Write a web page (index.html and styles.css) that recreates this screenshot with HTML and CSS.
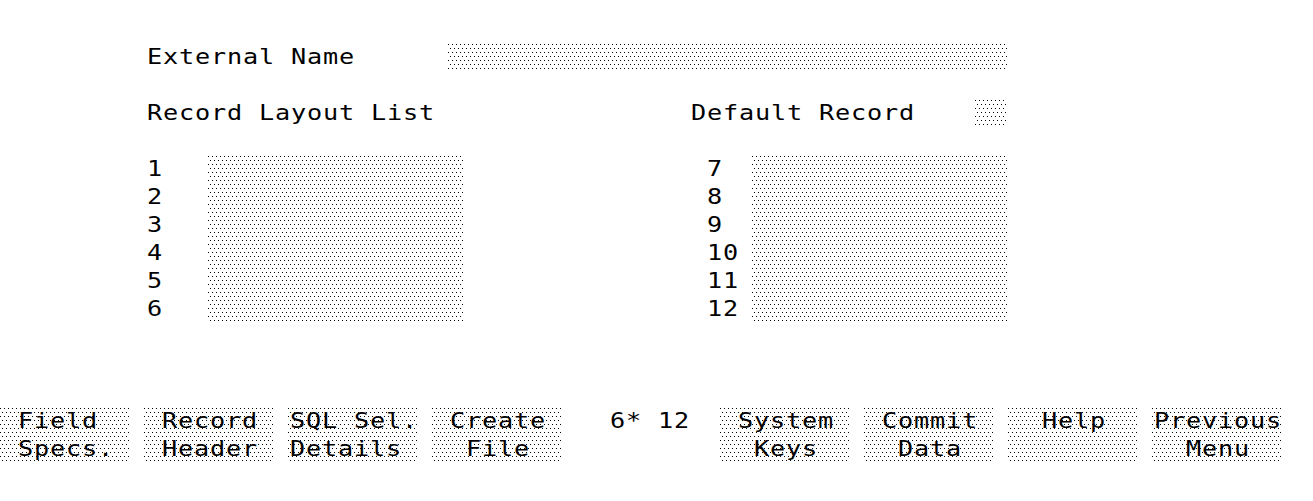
FILE: index.html
```html
<!DOCTYPE html>
<html lang="en">
  <head>
    <meta charset="UTF-8" />
    <title>File Definition</title>
    <link rel="stylesheet" href="styles.css">
  </head>

  <body>
    <div class="screen">
      <div class="form">
        <div class="row">
          <span class="label label-name">External Name</span>
          <span class="field field-name"></span>
        </div>

        <div class="row row-spaced">
          <span class="label label-list">Record Layout List</span>
          <span class="label label-default">Default Record</span>
          <span class="field field-default"></span>
        </div>

        <div class="lists row-spaced">
          <div class="list-group">
            <div class="list-numbers">
              <span>1</span>
              <span>2</span>
              <span>3</span>
              <span>4</span>
              <span>5</span>
              <span>6</span>
            </div>
            <span class="field field-list"></span>
          </div>

          <div class="list-group list-group-right">
            <div class="list-numbers list-numbers-right">
              <span>7</span>
              <span>8</span>
              <span>9</span>
              <span>10</span>
              <span>11</span>
              <span>12</span>
            </div>
            <span class="field field-list"></span>
          </div>
        </div>
      </div>

      <div class="softkeys">
        <div class="softkey"><span> Field</span><span> Specs.</span></div>
        <div class="softkey"><span> Record</span><span> Header</span></div>
        <div class="softkey"><span>SQL Sel.</span><span>Details</span></div>
        <div class="softkey"><span> Create</span><span>  File</span></div>
        <div class="softkey-status"><span>  6* 12</span></div>
        <div class="softkey"><span> System</span><span>  Keys</span></div>
        <div class="softkey"><span> Commit</span><span>  Data</span></div>
        <div class="softkey"><span>  Help</span><span></span></div>
        <div class="softkey"><span>Previous</span><span>  Menu</span></div>
      </div>
    </div>
  </body>
</html>
```

FILE: styles.css
```css
:root {
  --cell: 28px;
  --ink: #000;
  --paper: #fff;
}

html,
body {
  margin: 0;
  background: var(--paper);
  color: var(--ink);
  font-family: "DejaVu Sans Mono", "Liberation Mono", monospace;
  font-size: 21px;
  letter-spacing: 0.69px;
  line-height: var(--cell);
  overflow: hidden;
}

.screen {
  width: 1313px;
  height: 501px;
  padding-top: 43px;
  box-sizing: border-box;
}

/* terminal glyphs are wider than DejaVu's, stretch them to a 16px cell */
.label,
.list-numbers span,
.softkey span,
.softkey-status span {
  transform: scaleX(1.2);
  transform-origin: left center;
}

/* dotted half-tone used by every input field and softkey */
.field,
.softkey {
  background-color: var(--paper);
  background-image: conic-gradient(at 1px 1px, transparent 75%, var(--ink) 0),
    conic-gradient(at 1px 1px, transparent 75%, var(--ink) 0);
  background-size: 4px 8px;
  background-position: 0 1px, 2px 5px;
}

.form {
  padding-left: 147px;
}

.row {
  display: flex;
  height: var(--cell);
}

.row-spaced {
  margin-top: var(--cell);
}

.label {
  white-space: pre;
  flex-shrink: 0;
}

.label-name {
  width: 251px;
  margin-right: 50px;
}

.label-list {
  width: 453px;
  margin-right: 91px;
}

.label-default {
  width: 237px;
  margin-right: 47px;
}

.field {
  display: block;
  flex-shrink: 0;
  height: var(--cell);
}

.field-name {
  width: 559px;
}

.field-default {
  width: 32px;
}

.lists {
  display: flex;
}

.list-group {
  display: flex;
}

.list-group-right {
  margin-left: 244px;
}

.list-numbers {
  display: flex;
  flex-direction: column;
  width: 61px;
}

.list-numbers-right {
  width: 45px;
}

.field-list {
  width: 255px;
  height: calc(var(--cell) * 6);
}

.softkeys {
  display: flex;
  gap: 14px;
  margin-top: calc(var(--cell) * 3);
}

.softkey,
.softkey-status {
  display: flex;
  flex-direction: column;
  width: 130px;
  height: calc(var(--cell) * 2);
  padding-left: 2px;
  box-sizing: border-box;
  white-space: pre;
}

.softkey span,
.softkey-status span {
  height: var(--cell);
}
```
